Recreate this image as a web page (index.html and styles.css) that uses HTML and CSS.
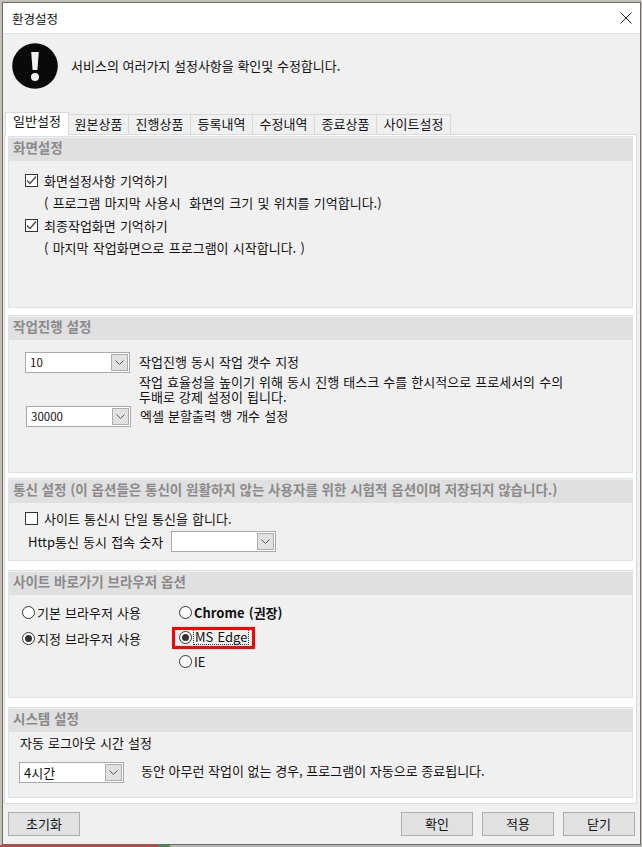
FILE: index.html
```html
<!DOCTYPE html>
<html lang="ko">
<head>
  <meta charset="utf-8">
  <title>환경설정</title>
  <link rel="stylesheet" href="styles.css">
</head>
<body>
  <div class="window">
    <div class="titlebar">
      <span>환경설정</span>
      <svg class="close" width="12" height="12" viewBox="0 0 12 12"><path d="M.5.5l11 11M11.5.5l-11 11" stroke="#222" fill="none"/></svg>
    </div>

    <div class="intro">
      <svg width="46" height="46" viewBox="0 0 46 46">
        <circle cx="23" cy="23" r="22.800" fill="#0a0a0a"/>
        <path d="M19.200 9h7.600l-1.400 18h-4.800z" fill="#f0f0f0"/>
        <circle cx="23" cy="34" r="4" fill="#f0f0f0"/>
      </svg>
      <p>서비스의 여러가지 설정사항을 확인및 수정합니다.</p>
    </div>

    <div class="tabs">
      <div class="tab active">일반설정</div>
      <div class="tab first">원본상품</div>
      <div class="tab">진행상품</div>
      <div class="tab">등록내역</div>
      <div class="tab">수정내역</div>
      <div class="tab">종료상품</div>
      <div class="tab last">사이트설정</div>
    </div>

    <div class="panel">
      <section class="group g-screen">
        <h2>화면설정</h2>
        <div class="group-body">
          <div class="row"><span class="check on"><svg width="11" height="11" viewBox="0 0 11 11"><path d="M1 5.500l3 3 6-7" stroke="#444" stroke-width="1.300" fill="none"/></svg></span>화면설정사항 기억하기</div>
          <div class="row note">( 프로그램 마지막 사용시&nbsp; 화면의 크기 및 위치를 기억합니다.)</div>
          <div class="row"><span class="check on"><svg width="11" height="11" viewBox="0 0 11 11"><path d="M1 5.500l3 3 6-7" stroke="#444" stroke-width="1.300" fill="none"/></svg></span>최종작업화면 기억하기</div>
          <div class="row note">( 마지막 작업화면으로 프로그램이 시작합니다. )</div>
        </div>
      </section>

      <section class="group g-work">
        <h2>작업진행 설정</h2>
        <div class="group-body">
          <div class="field">
            <div class="combo"><span class="num">10</span><i class="arrow"><svg width="9" height="5" viewBox="0 0 9 5"><path d="M.5.500l4 4 4-4" stroke="#555" fill="none"/></svg></i></div>
            <span class="field-label">작업진행 동시 작업 갯수 지정</span>
          </div>
          <p class="desc">작업 효율성을 높이기 위해 동시 진행 태스크 수를 한시적으로 프로세서의 수의<br>두배로 강제 설정이 됩니다.</p>
          <div class="field shift">
            <div class="combo"><span class="num">30000</span><i class="arrow"><svg width="9" height="5" viewBox="0 0 9 5"><path d="M.5.500l4 4 4-4" stroke="#555" fill="none"/></svg></i></div>
            <span class="field-label">엑셀 분할출력 행 개수 설정</span>
          </div>
        </div>
      </section>

      <section class="group g-net">
        <h2>통신 설정 (이 옵션들은 통신이 원활하지 않는 사용자를 위한 시험적 옵션이며 저장되지 않습니다.)</h2>
        <div class="group-body">
          <div class="row"><span class="check"></span>사이트 통신시 단일 통신을 합니다.</div>
          <div class="field http">
            <span class="http-label">Http통신 동시 접속 숫자</span>
            <div class="combo"><span></span><i class="arrow"><svg width="9" height="5" viewBox="0 0 9 5"><path d="M.5.500l4 4 4-4" stroke="#555" fill="none"/></svg></i></div>
          </div>
        </div>
      </section>

      <section class="group g-browser">
        <h2>사이트 바로가기 브라우저 옵션</h2>
        <div class="group-body radios">
          <div class="radio-col">
            <div class="radio"><i class="dot"></i>기본 브라우저 사용</div>
            <div class="radio"><i class="dot on"></i>지정 브라우저 사용</div>
          </div>
          <div class="radio-col">
            <div class="radio"><i class="dot"></i><b>Chrome (권장)</b></div>
            <div class="radio"><i class="dot on"></i><span class="focus">MS Edge</span><span class="marker"></span></div>
            <div class="radio"><i class="dot"></i>IE</div>
          </div>
        </div>
      </section>

      <section class="group g-system">
        <h2>시스템 설정</h2>
        <div class="group-body">
          <div class="logout-label">자동 로그아웃 시간 설정</div>
          <div class="field logout">
            <div class="combo"><span>4시간</span><i class="arrow"><svg width="9" height="5" viewBox="0 0 9 5"><path d="M.5.500l4 4 4-4" stroke="#555" fill="none"/></svg></i></div>
            <span class="field-label">동안 아무런 작업이 없는 경우, 프로그램이 자동으로 종료됩니다.</span>
          </div>
        </div>
      </section>
    </div>

    <div class="footer">
      <button>초기화</button>
      <div class="footer-right">
        <button>확인</button>
        <button>적용</button>
        <button>닫기</button>
      </div>
    </div>
  </div>
</body>
</html>
```

FILE: styles.css
```css
/* --- page --- */
*{box-sizing:border-box}
html,body{height:100%}
body{margin:0;padding:2px 1px 2px 2px;background:linear-gradient(90deg,#c8423e 0 158px,#4f8a52 158px 170px,#b5b5b5 170px) bottom/100% 2px no-repeat,#c4bfb8;font-family:"Noto Sans CJK KR","Noto Sans",sans-serif;font-size:13px;line-height:15px;word-spacing:.5px;color:#111}
p,h2{margin:0}

/* --- window --- */
.window{height:843px;border:1px solid #6b6b6b;background:#f0f0f0;display:flex;flex-direction:column}
.titlebar{height:31px;flex:none;background:#fff;border-bottom:1px solid #dfe6ec;display:flex;align-items:center;justify-content:space-between;padding:0 8px 0 9px;font-size:12.500px}
.intro{height:78px;flex:none;display:flex;gap:13px;padding:9px 0 0 9px;word-spacing:0}
.intro svg{flex:none}
.intro p{margin-top:15px}

/* --- tabs --- */
.tabs{display:flex;align-items:flex-end;height:23px;flex:none;padding-left:2px;position:relative;z-index:1}
.tab{height:21px;width:62px;border:1px solid #d9d9d9;border-left:0;border-bottom:0;text-align:center;line-height:17px}
.tab.active{height:23px;width:64px;background:#fff;border-left:1px solid #d9d9d9;line-height:16px}
.tab.first{width:60px}
.tab.last{width:74px}

.panel{width:633px;height:670px;flex:none;margin:-1px 0 0 1px;padding:1px 3px 0;background:#fff;border:1px solid #d9d9d9}

/* --- group boxes --- */
.group{border:1px solid #dbe3ea;background:#f0f0f0}
.group h2{height:23px;margin-top:1px;padding-left:4px;background:#e0e0e0;color:#8a8a8a;font-size:13.500px;font-weight:700;line-height:19px;word-spacing:0}
.g-screen{height:172px}
.g-work{height:158px;margin-top:7px}
.g-net{height:83px;margin-top:5px}
.g-browser{height:128px;margin-top:9px}
.g-system{height:91px;margin-top:9px}

.row{height:22.500px;display:flex;align-items:center;padding-left:16px}
.note{padding-left:35px;word-spacing:.6px}
.g-screen .group-body{padding-top:8px}
.check{width:13px;height:13px;margin-right:6px;border:1px solid #333;background:#fff;display:flex;align-items:center;justify-content:center}
.check svg{display:block}

/* --- combos --- */
.combo{width:105px;height:21px;flex:none;border:1px solid #a9a9a9;background:#fff;display:flex;align-items:center;justify-content:space-between;padding:1px 1px 1px 4px}
.num{font-size:11.500px;word-spacing:0}
.arrow{width:17px;height:17px;background:#e1e1e1;border:1px solid #acacac;display:flex;align-items:center;justify-content:center}
.arrow svg{display:block}
.field{display:flex;align-items:center;gap:9px}
.field-label{margin-top:-3px}
.g-work .group-body{padding:12px 0 0 16px}
.desc{margin:1px 0 0 114px;line-height:15px;word-spacing:.5px}
.shift{margin:2px 0 0 1px}
.g-net .group-body{padding-top:4px}
.http{padding-left:19px;gap:8px;margin-top:1px}
.http-label{margin-top:1px}

/* --- radios --- */
.radios{display:flex;padding:4px 0 0 13px}
.radio-col{width:157px}
.radio{height:26px;display:flex;align-items:center;gap:2px;position:relative}
.radio-col + .radio-col .radio{height:24.500px}
.radio-col + .radio-col .radio:first-child{height:26px}
.dot{width:13px;height:13px;flex:none;border:1px solid #333;border-radius:50%;background:#fff;display:flex;align-items:center;justify-content:center}
.dot.on::after{content:"";width:7px;height:7px;border-radius:50%;background:#333}
.focus{outline:1px dotted #333;padding:0 1px;line-height:14px}
.marker{position:absolute;left:-7px;top:2px;width:83px;height:22px;border:3px solid #f00}

/* --- system --- */
.g-system .group-body{padding:0 0 0 11px}
.logout-label{height:22px;line-height:22px}
.logout{gap:17px;margin:8px 0 0 -1px;word-spacing:0}
.logout .field-label{margin-top:-5px}

/* --- footer --- */
.footer{flex:1;display:flex;justify-content:space-between;padding:8px 5px 0 5px}
.footer-right{display:flex;gap:9px}
button{width:72px;height:24px;padding:0 0 2px;border:1px solid #adadad;background:#e1e1e1;font:inherit;color:#111}
```
